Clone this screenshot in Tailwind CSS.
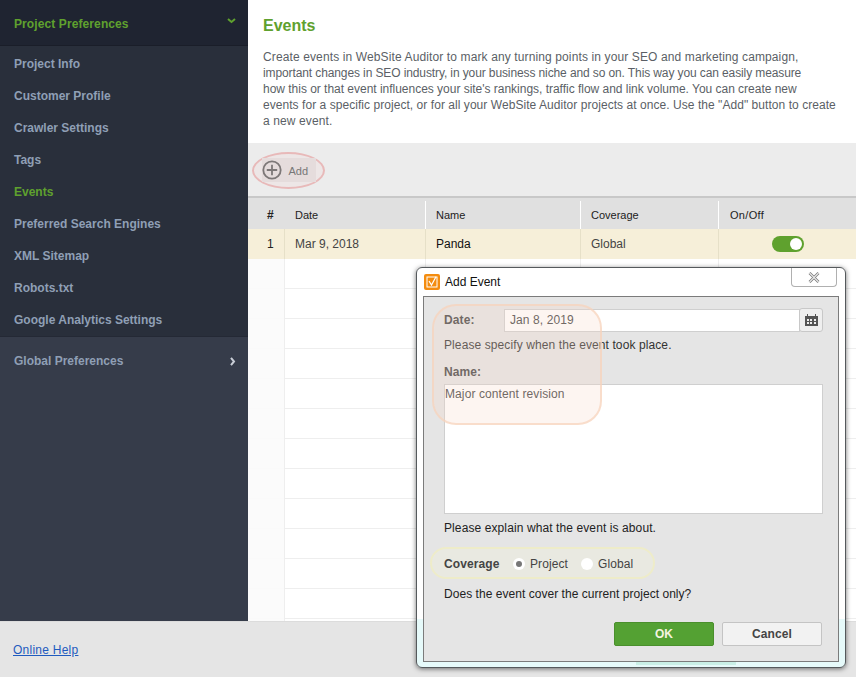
<!DOCTYPE html>
<html><head><meta charset="utf-8"><script src="https://cdn.jsdelivr.net/npm/@tailwindcss/browser@4"></script></head>
<body class="m-0 bg-white">
<div class="relative w-[856px] h-[677px] overflow-hidden font-['Liberation_Sans',Arial,sans-serif] text-[12px] bg-white">
  <div class="flex h-[621px]">
    <aside class="w-[248px] shrink-0 bg-[#363c4a] flex flex-col font-bold text-[12px]">
      <div class="h-[46px] shrink-0 bg-[#1f2431] flex items-center justify-between pt-[2px] pl-[14px] pr-[12px] text-[#5fa12e] border-b border-[#1a1e29]">
        <span class="text-[12px] tracking-[0.1px]">Project Preferences</span>
        <svg width="9" height="6" viewBox="0 0 9 6" class="mb-[5px]"><path d="M1 1l3.5 3L8 1" stroke="#5fa12e" stroke-width="2" fill="none"/></svg>
      </div>
      <nav class="h-[291px] shrink-0 bg-[#292f3b] text-[#8f9fb5] flex flex-col pt-[2px] border-b border-[#242935]">
        <a class="h-[32px] shrink-0 pl-[14px] flex items-center">Project Info</a>
        <a class="h-[32px] shrink-0 pl-[14px] flex items-center">Customer Profile</a>
        <a class="h-[32px] shrink-0 pl-[14px] flex items-center">Crawler Settings</a>
        <a class="h-[32px] shrink-0 pl-[14px] flex items-center">Tags</a>
        <a class="h-[32px] shrink-0 pl-[14px] flex items-center text-[#5fa12e]">Events</a>
        <a class="h-[32px] shrink-0 pl-[14px] flex items-center">Preferred Search Engines</a>
        <a class="h-[32px] shrink-0 pl-[14px] flex items-center">XML Sitemap</a>
        <a class="h-[32px] shrink-0 pl-[14px] flex items-center">Robots.txt</a>
        <a class="h-[32px] shrink-0 pl-[14px] flex items-center">Google Analytics Settings</a>
      </nav>
      <div class="h-[48px] shrink-0 flex items-center justify-between pl-[14px] pr-[12px] text-[#8f9fb5]">
        <span>Global Preferences</span>
        <svg width="6" height="9" viewBox="0 0 6 9"><path d="M1 .8l3 3.7-3 3.7" stroke="#c9ced6" stroke-width="2" fill="none"/></svg>
      </div>
    </aside>
    <main class="flex-1 flex flex-col min-w-0">
      <div class="h-[143px] shrink-0 pl-[15px] pr-[12px] pt-[16px]">
        <h1 class="text-[16px] leading-[20px] font-bold text-[#5fa12e] m-0">Events</h1>
        <p class="mt-[13px] text-[12px] leading-[16px] text-[#5b5f66] whitespace-nowrap"><span class="tracking-[0.12px]">Create events in WebSite Auditor to mark any turning points in your SEO and marketing campaign,</span><br><span class="tracking-[-0.11px]">important changes in SEO industry, in your business niche and so on. This way you can easily measure</span><br><span class="tracking-[-0.02px]">how this or that event influences your site's rankings, traffic flow and link volume. You can create new</span><br><span class="tracking-[0.05px]">events for a specific project, or for all your WebSite Auditor projects at once. Use the "Add" button to create</span><br><span class="tracking-[0.12px]">a new event.</span></p>
      </div>
      <div class="h-[55px] shrink-0 bg-[#ececec] border-b-2 border-[#c8c8c8] flex items-center pl-[4px] pt-[1px] relative">
        <div class="w-[73px] h-[37px] rounded-[50%] border-2 border-[#e8b9b9] bg-[#f0dfdf]/40 flex items-center justify-center">
          <div class="w-[54px] h-[24px] bg-[#e5dcdc] flex items-center gap-[7px]">
            <svg width="20" height="20" viewBox="0 0 20 20"><circle cx="10" cy="10" r="8.7" fill="none" stroke="#7d7878" stroke-width="1.8"/><path d="M10 4.8v10.4M4.8 10h10.4" stroke="#7d7878" stroke-width="1.8"/></svg>
            <span class="text-[11px] text-[#777] mt-[2px]">Add</span>
          </div>
        </div>
      </div>
      <div class="flex-1 overflow-hidden flex flex-col">
        <div class="grid grid-cols-[37px_140px_155px_138px_138px] h-[31px] pt-[3px] bg-[#e0e0e0] text-[11px] text-[#222] items-center shrink-0">
          <div class="pl-[19px] font-bold text-[12px]">#</div>
          <div class="pl-[10px]">Date</div>
          <div class="pl-[10px] h-full flex items-center border-l border-white">Name</div>
          <div class="pl-[10px] h-full flex items-center border-l border-white">Coverage</div>
          <div class="pl-[11px] h-full flex items-center border-l border-white tracking-[0.3px]">On/Off</div>
        </div>
        <div class="grid grid-cols-[37px_140px_155px_138px_138px] h-[30px] bg-[#f6efd9] text-[12px] items-center shrink-0">
          <div class="pl-[19px] h-full flex items-center border-r border-[#e6e0c8] text-[#222]">1</div>
          <div class="pl-[10px] text-[#444]">Mar 9, 2018</div>
          <div class="pl-[10px] h-full flex items-center border-l border-[#e6e0c8] text-[#111]">Panda</div>
          <div class="pl-[10px] h-full flex items-center border-l border-[#e6e0c8] text-[#444]">Global</div>
          <div class="h-full flex items-center justify-center border-l border-[#e6e0c8]"><span class="w-[32px] h-[16px] rounded-full bg-[#5fa12e] flex items-center justify-end pr-[2px]"><span class="w-[12px] h-[12px] rounded-full bg-white"></span></span></div>
        </div>
        <div class="flex-1 bg-[repeating-linear-gradient(to_bottom,#fff_0,#fff_29px,#eeeeee_29px,#eeeeee_30px)] grid grid-cols-[37px_140px_155px_138px_138px]">
          <div class="bg-[#fbfbfb]/90 border-r border-[#eeeeee]"></div>
          <div></div>
          <div class="border-l border-[#eeeeee]"></div>
          <div class="border-l border-[#eeeeee]"></div>
          <div class="border-l border-[#eeeeee]"></div>
        </div>
      </div>
    </main>
  </div>
  <footer class="h-[56px] bg-[#e5e5e5] border-t border-[#dcdcdc] flex items-center pl-[13px] relative">
    <a class="text-[12px] text-[#1f5bbf] underline tracking-[0.25px]">Online Help</a>
  </footer>

  <section class="absolute left-[416px] top-[267px] w-[430px] h-[401px] rounded-[6px] border border-[#55595c] bg-[linear-gradient(to_bottom,#ffffff_88%,#e6fafa_88%)] shadow-[0_1px_5px_rgba(0,0,0,0.55)] flex flex-col text-[12px]">
    <div class="h-[28px] flex items-center pl-[7px] gap-[5px] relative text-[#111]">
      <span class="w-[16px] h-[16px] rounded-[2px] bg-[#f48c0f] flex items-center justify-center">
        <svg width="12" height="12" viewBox="0 0 12 12"><rect x="1" y="1" width="10" height="10" fill="none" stroke="#fff" stroke-width="1"/><path d="M3 5l2.5 4L10 0.8" stroke="#fff" stroke-width="1.2" fill="none"/></svg>
      </span>
      <span>Add Event</span>
      <div class="absolute right-[8px] top-0 w-[46px] h-[19px] border border-t-0 border-[#b0b0b0] rounded-b-[4px] flex items-center justify-center">
        <svg width="12" height="11" viewBox="0 0 12 11"><path d="M1.5 1l9 9M10.5 1l-9 9" stroke="#777" stroke-width="2.6"/><path d="M1.5 1l9 9M10.5 1l-9 9" stroke="#e8e8e8" stroke-width="1.2"/></svg>
      </div>
    </div>
    <div class="mx-[6px] w-[416px] h-[366px] border border-[#7b7b7b] bg-[#e5e5e5] pl-[20px] pr-[14px] text-[#333] relative tracking-[0.1px]">
      <div class="flex items-center h-[24px] mt-[11px]">
        <b class="w-[60px] text-[#444]">Date:</b>
        <div class="w-[296px] h-[23px] bg-white border border-[#cfcfcf] flex items-center pl-[5px] text-[#444]">Jan 8, 2019</div>
        <div class="w-[24px] h-[24px] ml-[-1px] bg-[#efefef] border border-[#c8c8c8] rounded-[3px] flex items-center justify-center">
          <svg width="13" height="12" viewBox="0 0 13 12"><path fill="#555" d="M0 2h2V0h1v2h7V0h1v2h2v10H0z"/><path fill="#eee" d="M2 5h2v2H2zM5 5h2v2H5zM9 5h2v2H9zM2 8h2v2H2zM5 8h2v2H5zM9 8h2v2H9z"/></svg>
        </div>
      </div>
      <p class="mt-[6px] leading-[15px]">Please specify when the event took place.</p>
      <b class="block mt-[12px] leading-[15px] text-[#444]">Name:</b>
      <div class="mt-[4px] w-[379px] h-[130px] bg-white border border-[#cfcfcf] pt-[1px] leading-[16px] text-[#444]">Major content revision</div>
      <p class="mt-[7px] leading-[15px] text-[#222]">Please explain what the event is about.</p>
      <div class="relative z-10 mt-[16px] h-[24px] flex items-center">
        <b class="w-[69px] text-[#444]">Coverage</b>
        <span class="w-[12px] h-[12px] rounded-full bg-white flex items-center justify-center mr-[5px]"><span class="w-[6px] h-[6px] rounded-full bg-[#777]"></span></span>
        <span class="w-[51px] text-[#444]">Project</span>
        <span class="w-[12px] h-[12px] rounded-full bg-white mr-[5px]"></span>
        <span class="text-[#444]">Global</span>
      </div>
      <p class="mt-[11px] leading-[15px] text-[#222] tracking-[0.04px]">Does the event cover the current project only?</p>
      <div class="mt-[20px] flex justify-end gap-[8px] pr-[2px]">
        <button class="w-[100px] h-[24px] bg-[#54a133] border border-[#4a8f2c] rounded-[2px] text-[#f4f4e0] font-bold">OK</button>
        <button class="w-[100px] h-[24px] bg-[#f2f2f2] border border-[#c4c4c4] rounded-[2px] text-[#444] font-bold">Cancel</button>
      </div>
      <div class="absolute left-[8px] top-[7px] w-[170px] h-[121px] rounded-[24px] border-2 border-[#f8d3bb]/70 bg-[#f7d9c8]/25"></div>
      <div class="absolute left-[6px] top-[250px] w-[225px] h-[32px] rounded-full border-2 border-[#eeecc9] bg-[#f3f2d8]/30"></div>
    </div>
    <div class="absolute left-[219px] bottom-[2px] w-[100px] h-[3px] bg-[#c9efe6]"></div>
  </section>
</div>
</body></html>
